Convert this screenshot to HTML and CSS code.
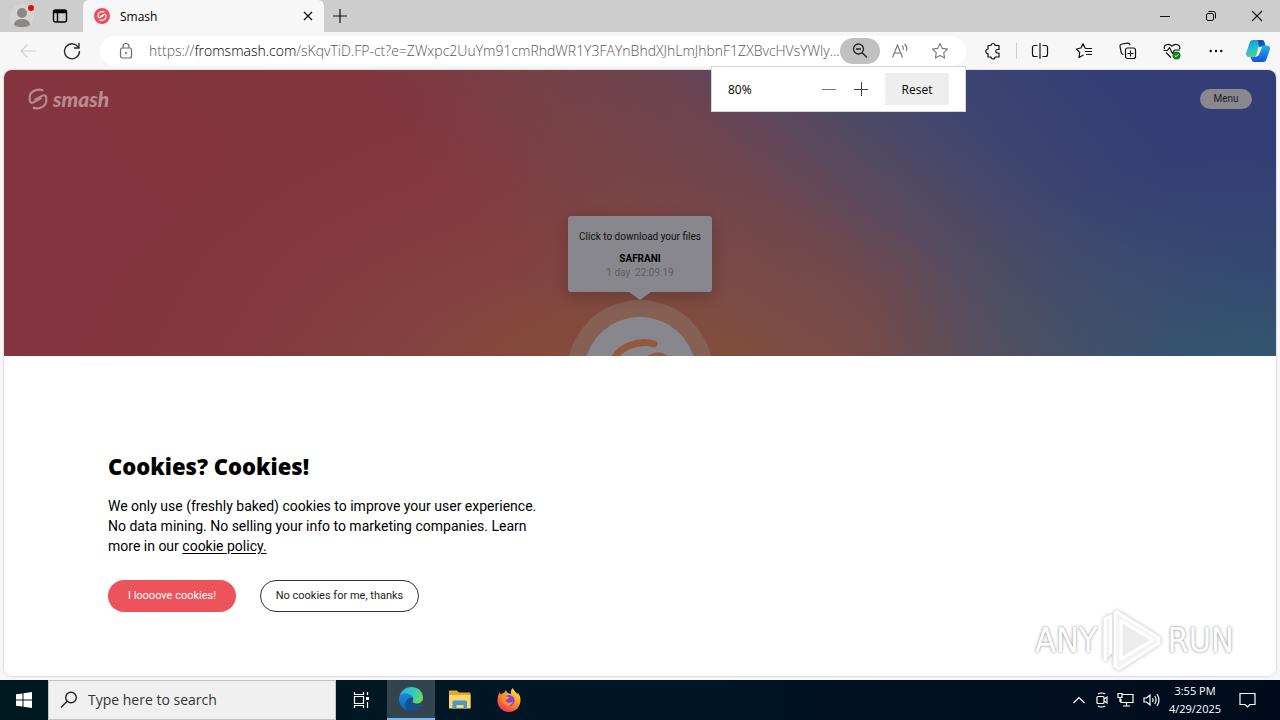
FILE: index.html
```html
<!DOCTYPE html>
<html lang="en">
<head>
<meta charset="utf-8">
<meta name="viewport" content="width=device-width, initial-scale=1">
<title>Smash</title>
<link rel="stylesheet" href="styles.css">
</head>
<body>
<div class="desktop">
  <header class="tabstrip">
    <button class="icon-btn profile" aria-label="Profile">
      <svg width="28" height="28" viewBox="0 0 28 28"><circle cx="14" cy="14" r="12" fill="#d6d4d2"/><circle cx="14" cy="11" r="5" fill="#8b8987"/><path d="M6 23c0-4 3.500-6 8-6s8 2 8 6c-4 3-12 3-16 0z" fill="#8b8987"/><circle cx="23" cy="6" r="3" fill="#e30c13"/></svg>
    </button>
    <button class="icon-btn workspaces" aria-label="Tab actions">
      <svg width="16" height="16" viewBox="0 0 16 16" fill="none" stroke="#000" stroke-width="1.400"><rect x="1.500" y="2" width="13" height="12" rx="2"/><path d="M1.500 4.500h13M5.500 4.500V14" /><path d="M2 3.300h12" stroke-width="2"/></svg>
    </button>
    <div class="tab">
      <svg width="16" height="16" viewBox="0 0 112 112"><circle cx="56" cy="56" r="56" fill="#e9505c"/><g fill="none" stroke="#fff" stroke-width="8" stroke-linecap="round"><path d="M70 27C58 23 31 28 29 48v12c0 8 6 10 12 7l24-13"/><path d="M42 85c12 4 39-1 41-21V52c0-8-6-10-12-7L47 58"/></g></svg>
      <span class="tab-title">Smash</span>
      <button class="icon-btn tab-close" aria-label="Close tab"><svg width="10" height="10" viewBox="0 0 10 10" stroke="#111" stroke-width="1.300"><path d="M1 1l8 8M9 1L1 9"/></svg></button>
    </div>
    <button class="icon-btn new-tab" aria-label="New tab"><svg width="14" height="14" viewBox="0 0 14 14" stroke="#111" stroke-width="1.200"><path d="M7 0v14M0 7h14"/></svg></button>
    <div class="window-controls">
      <button class="icon-btn" aria-label="Minimize"><svg width="12" height="12" viewBox="0 0 12 12" stroke="#111"><path d="M1 6.500h10"/></svg></button>
      <button class="icon-btn" aria-label="Restore"><svg width="12" height="12" viewBox="0 0 12 12" fill="none" stroke="#111"><rect x="1.500" y="3.500" width="7" height="7" rx="1.500"/><path d="M3.500 1.500h5a2 2 0 0 1 2 2v5"/></svg></button>
      <button class="icon-btn" aria-label="Close"><svg width="12" height="12" viewBox="0 0 12 12" stroke="#111" stroke-width="1.100"><path d="M1 1l10 10M11 1L1 11"/></svg></button>
    </div>
  </header>

  <div class="toolbar">
    <button class="icon-btn tool" aria-label="Back"><svg width="18" height="16" viewBox="0 0 18 16" fill="none" stroke="#cfcfcf" stroke-width="1.200"><path d="M17 8H2M8.500 1.500L2 8l6.500 6.500"/></svg></button>
    <button class="icon-btn tool" aria-label="Refresh"><svg width="18" height="18" viewBox="0 0 18 18" fill="none" stroke="#222" stroke-width="1.300"><path d="M15.500 5.500A7.500 7.500 0 1 0 16.500 9"/><path d="M16 1v5h-5"/></svg></button>
    <div class="address">
      <button class="icon-btn lock" aria-label="Site information"><svg width="14" height="18" viewBox="0 0 14 18" fill="none" stroke="#6b6b6b" stroke-width="1.200"><rect x="1.500" y="6" width="11" height="10" rx="2"/><path d="M4 6V4.500a3 3 0 0 1 6 0V6"/><circle cx="7" cy="11" r="1" fill="#6b6b6b" stroke="none"/></svg></button>
      <div class="url">https://<span class="host">fromsmash.com</span>/sKqvTiD.FP-ct?e=ZWxpc2UuYm91cmRhdWR1Y3FAYnBhdXJhLmJhbnF1ZXBvcHVsYWly...</div>
      <button class="icon-btn zoom-btn" aria-label="Zoom"><svg width="16" height="16" viewBox="0 0 16 16" fill="none" stroke="#222" stroke-width="1.300"><circle cx="6.500" cy="6" r="5"/><path d="M10.200 9.700L15 14.500M4 6h5"/></svg></button>
      <button class="icon-btn addr-tool" aria-label="Read aloud"><svg width="18" height="18" viewBox="0 0 18 18" fill="none" stroke="#777" stroke-width="1.200"><path d="M1.500 15.500L6.500 3l5 12.500M3.300 11h6.400M11 3.500q2 2 1.300 4.500M13.500 2q3.500 3 1.800 7"/></svg></button>
      <button class="icon-btn addr-tool" aria-label="Add to favorites"><svg width="18" height="18" viewBox="0 0 18 18" fill="none" stroke="#777" stroke-width="1.100" stroke-linejoin="round"><path d="M9 1.500l2.300 4.900 5.200.7-3.800 3.700.9 5.300L9 13.600l-4.600 2.500.9-5.300L1.500 7.100l5.200-.7z"/></svg></button>
      <div class="zoom-pop">
        <span class="zoom-value">80%</span>
        <button class="icon-btn zoom-step" aria-label="Zoom out"><svg width="14" height="14" viewBox="0 0 14 14" stroke="#777"><path d="M0 7.500h14"/></svg></button>
        <button class="icon-btn zoom-step" aria-label="Zoom in"><svg width="14" height="14" viewBox="0 0 14 14" stroke="#444"><path d="M0 7.500h14M7.500 0v14"/></svg></button>
        <button class="reset">Reset</button>
      </div>
    </div>
    <button class="icon-btn tool ext" aria-label="Extensions"><svg width="18" height="18" viewBox="0 0 18 18" fill="none" stroke="#111" stroke-width="1.200" stroke-linejoin="round"><path d="M4 3.500h3a2 2 0 0 1 4 0h4v4h-1.500a1.600 1.600 0 0 0 0 3.500H15v4h-4a2 2 0 0 1-4 0H4v-3.500a2.100 2.100 0 0 1 0-4.500z"/></svg></button>
    <span class="divider"></span>
    <button class="icon-btn tool" aria-label="Split screen"><svg width="18" height="18" viewBox="0 0 18 18" fill="none" stroke="#111" stroke-width="1.200"><path d="M6.500 3.500h-3a2 2 0 0 0-2 2v7a2 2 0 0 0 2 2h3M11.500 3.500h3a2 2 0 0 1 2 2v7a2 2 0 0 1-2 2h-3M9 1v16"/></svg></button>
    <button class="icon-btn tool" aria-label="Favorites"><svg width="18" height="18" viewBox="0 0 18 18" fill="none" stroke="#111" stroke-width="1.200" stroke-linejoin="round"><path d="M11 6.500L10 6 8 1.800 6 6 1.500 7l3.200 3.500-.7 5L8.500 13M11 6.500h6M10 9.500h7M11 12.500h6"/></svg></button>
    <button class="icon-btn tool" aria-label="Collections"><svg width="18" height="18" viewBox="0 0 18 18" fill="none" stroke="#111" stroke-width="1.200"><rect x="6.500" y="6" width="10" height="10.500" rx="2"/><path d="M11.500 8.500v6M8.500 11.500h6M4.500 12.500c-1.500 0-2-.6-2.300-2L1 4.500c-.3-1.500.5-2.200 2-2.500l5.500-.8c1.500-.2 2.300.5 2.500 2"/></svg></button>
    <button class="icon-btn tool" aria-label="Browser essentials"><svg width="18" height="18" viewBox="0 0 18 18" fill="none" stroke="#111" stroke-width="1.200" stroke-linejoin="round"><path d="M1.500 7C0 3 5.500.5 9 4.200 12.500.5 18 3 16.500 7M3 10.500L8 15.500M.5 8.500h4L6.500 5.500l3 6 2-3.500h5.500"/><circle cx="13.500" cy="13.500" r="4" fill="#178017" stroke="none"/><path d="M11.800 13.500l1.200 1.200 2.300-2.400" stroke="#fff" stroke-width="1"/></svg></button>
    <button class="icon-btn tool" aria-label="Settings and more"><svg width="14" height="4" viewBox="0 0 14 4" fill="#111"><circle cx="1.700" cy="2" r="1.200"/><circle cx="7" cy="2" r="1.200"/><circle cx="12.300" cy="2" r="1.200"/></svg></button>
    <button class="icon-btn copilot" aria-label="Copilot"><svg width="24" height="24" viewBox="0 0 24 24"><defs><linearGradient id="ca" x1="0" y1="0" x2=".4" y2="1"><stop offset="0" stop-color="#1689e8"/><stop offset=".5" stop-color="#20bfd0"/><stop offset="1" stop-color="#57d184"/></linearGradient><linearGradient id="cb" x1="0" y1="0" x2="0" y2="1"><stop offset="0" stop-color="#20b6ef"/><stop offset="1" stop-color="#1452d8"/></linearGradient></defs><path d="M7 1h9c1.500 0 2 1 2.500 2.500L19.500 7h-3c-2 0-2.700 1-3.200 2.500L11 16c-.6 1.500-1.300 2-3 2H3c-2.500 0-3.500-2-2.700-4.500L3.500 4C4.200 2 5 1 7 1z" fill="url(#ca)"/><path d="M11.500 1H16c1.500 0 2 1 2.500 2.500L19.500 7h-3c-1.500 0-2.500.5-3 2z" fill="#1357ac"/><path d="M17 23H8c-1.500 0-2-1-2.500-2.500L4.500 18H8c2 0 2.700-1 3.200-2.500L13.500 9c.6-1.500 1.300-2.500 3-2.500H21c2.500 0 3.500 2 2.700 4.500L20.500 20c-.7 2-1.500 3-3.500 3z" fill="url(#cb)"/><path d="M12.500 8h3.500L13 15.500c-.6 1.500-1.500 2-4 2 1-.5 1.300-1 1.700-2.500z" fill="#f7f7f7"/></svg></button>
  </div>

  <main class="page">
    <section class="hero">
      <div class="hero-bar">
        <a class="brand" href="#">
          <svg width="20" height="22" viewBox="24 20 64 72" fill="none" stroke="currentColor" stroke-width="7" stroke-linecap="round"><path d="M70 27C58 23 31 28 29 48v12c0 8 6 10 12 7l24-13"/><path d="M42 85c12 4 39-1 41-21V52c0-8-6-10-12-7L47 58"/></svg>
          <span>smash</span>
        </a>
        <button class="menu">Menu</button>
      </div>
      <div class="download">
        <div class="bubble">
          <p class="bubble-title">Click to download your files</p>
          <p class="bubble-name">SAFRANI</p>
          <p class="bubble-time">1 day&nbsp; 22:09:19</p>
        </div>
        <button class="ring" aria-label="Download">
          <span class="disc"><svg width="112" height="112" viewBox="0 0 112 112" fill="none" stroke="#94573f" stroke-width="7" stroke-linecap="round"><path d="M70 27C58 23 31 28 29 48v12c0 8 6 10 12 7l24-13"/><path d="M42 85c12 4 39-1 41-21V49c0-10-8-12-16-8L47 54"/></svg></span>
        </button>
      </div>
    </section>
    <section class="cookies">
      <h1>Cookies? Cookies!</h1>
      <p class="cookie-text">We only use (freshly baked) cookies to improve your user experience. No data mining. No selling your info to marketing companies. Learn more in our <a href="#">cookie policy.</a></p>
      <div class="actions">
        <button class="accept">I loooove cookies!</button>
        <button class="decline">No cookies for me, thanks</button>
      </div>
      <div class="watermark">
        <span>ANY</span>
        <svg width="58" height="64" viewBox="0 0 58 64" fill="none" stroke="#fff" stroke-width="3" stroke-linejoin="round"><path d="M2 53V11l6-3v38M14 4l42 26v5L16 61l-4-3V5z" fill="#f3f3f3"/><path d="M18 13v38l32-19z" fill="#ececec"/></svg>
        <span>RUN</span>
      </div>
    </section>
  </main>

  <footer class="taskbar">
    <button class="icon-btn start" aria-label="Start"><svg width="16" height="16" viewBox="0 0 16 16" fill="#fff"><path d="M0 2.300l6.500-.9v6.100H0zM7.500 1.200L16 0v7.500H7.500zM0 8.500h6.500v6.100L0 13.700zM7.500 8.500H16V16l-8.500-1.200z"/></svg></button>
    <label class="search">
      <svg width="18" height="18" viewBox="0 0 18 18" fill="none" stroke="#222" stroke-width="1.400"><circle cx="11" cy="6.500" r="5.300"/><path d="M7.200 10.300L1 16.500"/></svg>
      <input type="text" placeholder="Type here to search" aria-label="Type here to search">
    </label>
    <div class="tasks">
      <button class="icon-btn task" aria-label="Task view"><svg width="18" height="18" viewBox="0 0 18 18" fill="none" stroke="#fff" stroke-width="1.200"><path d="M1.500 1v2.500h9V1M1.500 17v-2.500h9V17M1.500 5.500h9v7h-9zM14.500 1v3M14.500 11v6"/><rect x="13" y="6" width="3" height="3" fill="#fff" stroke="none"/></svg></button>
      <button class="icon-btn task active" aria-label="Microsoft Edge"><svg width="24" height="24" viewBox="0 0 24 24"><defs><linearGradient id="ea" x1="0" y1="0" x2="1" y2=".3"><stop offset="0" stop-color="#2aa6dc"/><stop offset=".6" stop-color="#32c8c4"/><stop offset="1" stop-color="#61d86a"/></linearGradient><linearGradient id="eb" x1="0" y1="0" x2="0" y2="1"><stop offset="0" stop-color="#1788d8"/><stop offset="1" stop-color="#1068bd"/></linearGradient></defs><path d="M.3 10.500C1.500 4 6.500 0 12.500 0 19 0 24 4.800 24 10.500c0 4-3 6-6 6-3.500 0-4.800-1.300-4.500-2.200 1.300-1.500 1-4-1-5.500C9 6.500 3 7 .3 10.500z" fill="url(#ea)"/><path d="M0 12c.3-4 4-6.200 8-5.500 3.500.5 5.800 2.900 5.700 5.300-.2 1-1.200 1.500-1.200 3 0 3.200 5.500 5.200 9.700 2.600.5-.3.900.1.600.6C20.500 21.800 16.500 24 12 24 5.500 24 0 19 0 12z" fill="url(#eb)"/><path d="M8.500 23.500C5 20 5.500 14 9.500 11.500c2-1 4.200-.4 4.200.8-.3.800-1.200 1.300-1.200 2.500 0 3.200 5.500 5.200 9.700 2.600.5-.3.900.1.600.6-2.500 4.500-9 7-14.300 5.500z" fill="#164f91"/></svg></button>
      <button class="icon-btn task" aria-label="File Explorer"><svg width="22" height="20" viewBox="0 0 22 20"><path d="M0 1.500C0 .7.500.5 1 .5h7l2 2h10.500c.7 0 1 .3 1 1V18H0z" fill="#e7a72b"/><path d="M0 5h21.500v13.500H0z" fill="#ffd667"/><path d="M3.500 19v-7c0-1 .5-1.500 1.500-1.500h11.500c1 0 1.500.5 1.500 1.500v7h-3.500v-4h-7v4z" fill="#4599cf"/></svg></button>
      <button class="icon-btn task" aria-label="Firefox"><svg width="24" height="24" viewBox="0 0 24 24"><defs><linearGradient id="ff" x1=".8" y1="0" x2=".2" y2="1"><stop offset="0" stop-color="#fff04a"/><stop offset=".4" stop-color="#ff9827"/><stop offset="1" stop-color="#f42a58"/></linearGradient></defs><path d="M3 4c0 1.300.3 2 1.200 2.500C5 5.600 6 5 7.500 4.800 7.500 3.800 8 3 9 2.300c.3 1.500 1.200 2.200 2.500 3L14 6c-.3-2.500 0-4.500 2-6 .3 2.500 3 4 4.500 6.500 0-.8 0-1.500-.3-2.200C23 7 23.500 9.500 23.500 12c0 7-5 12-11.500 12S.5 19 .5 13C.5 9 1.500 6 3 4z" fill="url(#ff)"/><circle cx="12" cy="12.500" r="5.500" fill="#7b46d9"/><path d="M5 8.500c3-1.500 4.500 0 7.500.7-.5 1.800-3 1.700-3.800 3 .8 3.500 5.500 2.800 7.300.8-.5 5-6 6-8.800 3.800C5 15 4.200 11.500 5 8.500z" fill="#ff8e25"/></svg></button>
    </div>
    <div class="tray">
      <svg width="12" height="8" viewBox="0 0 12 8" fill="none" stroke="#fff" stroke-width="1.200"><path d="M.5 7L6 1.500 11.500 7"/></svg>
      <svg width="14" height="16" viewBox="0 0 14 16" fill="none" stroke="#fff" stroke-width="1.200"><rect x="3" y="4.500" width="7" height="7" rx="1"/><path d="M10 7l3-2v6l-3-2M4 2q3.500-2 7 0M4 14q3.500 2 7 0"/></svg>
      <svg width="17" height="16" viewBox="0 0 17 16" fill="none" stroke="#fff" stroke-width="1.200"><path d="M5.500 2.500H16v8H4V7M9.500 10.500v3.500M6 14h7M1 1.500h4v4H1zM3 5.500V10"/></svg>
      <svg width="17" height="14" viewBox="0 0 17 14" fill="none" stroke="#fff" stroke-width="1.200"><path d="M1 5h2.500L7 2v10L3.500 9H1zM9.500 5q1.300 2 0 4M11.800 3q2.600 4 0 8M14 1q4 6 0 12"/></svg>
    </div>
    <div class="clock"><span>3:55 PM</span><span>4/29/2025</span></div>
    <button class="icon-btn notify" aria-label="Notifications"><svg width="17" height="17" viewBox="0 0 17 17" fill="none" stroke="#fff" stroke-width="1.200"><path d="M1 1.500h15v11h-5L8.500 15 6 12.500H1z"/></svg></button>
  </footer>
</div>
</body>
</html>
```
FILE: styles.css
```css
* { box-sizing: border-box; }
body { margin: 0; font-family: "Open Sans", "Noto Sans", sans-serif; font-size: 12px; color: #000; }
button { font: inherit; color: inherit; border: 0; padding: 0; background: none; }
p, h1 { margin: 0; }
svg { display: block; flex: none; }

.desktop { display: flex; flex-direction: column; min-height: 100vh; background: #f7f7f7; }
.icon-btn { display: flex; align-items: center; justify-content: center; flex: none; }

.tabstrip { display: flex; height: 32px; background: #cdcdcd; }
.profile { width: 44px; }
.workspaces { width: 32px; }
.tab { display: flex; align-items: center; gap: 10px; width: 241px; margin-left: 7px; padding: 0 8px 0 11px; background: #f7f7f7; border-radius: 6px 6px 0 0; }
.tab-title { flex: 1; }
.tab-close { width: 16px; height: 16px; }
.new-tab { width: 32px; }
.window-controls { display: flex; margin-left: auto; }
.window-controls .icon-btn { width: 46px; }

.toolbar { display: flex; align-items: center; height: 38px; padding: 0 2px 0 6px; }
.tool { width: 44px; height: 30px; }
.address { position: relative; display: flex; align-items: center; flex: 1; min-width: 0; height: 30px; margin: 0 4px 0 6px; padding: 0 6px 0 19px; background: #fff; border-radius: 15px; }
.lock { width: 14px; margin-right: 16px; }
.url { flex: 1; min-width: 0; overflow: hidden; white-space: nowrap; font-size: 14px; line-height: 18px; font-weight: 300; color: #555; }
.host { color: #000; }
.zoom-btn { width: 40px; height: 26px; border-radius: 13px; background: #c0c0c0; }
.addr-tool { width: 40px; height: 26px; }
.ext { width: 46px; }
.divider { width: 1px; height: 16px; margin-right: 1px; background: #ccc; }
.toolbar > .copilot { width: 40px; height: 30px; }

.zoom-pop { position: absolute; z-index: 2; top: 100%; right: 0; display: flex; align-items: center; width: 255px; height: 46px; padding: 0 16px; background: #fff; border: 1px solid #d5d5dc; }
.zoom-value { flex: 1; }
.zoom-step { width: 32px; height: 32px; }
.reset { width: 64px; height: 32px; margin-left: 8px; background: #eee; border-radius: 2px; }

.page { display: flex; flex-direction: column; flex: 1; margin: 0 4px 4px; background: #fff; border-radius: 8px; overflow: hidden; box-shadow: 0 0 2px #aaa; }
.hero { flex: 1 0 0; display: flex; flex-direction: column; height: 0; min-height: 286px; overflow: hidden;
  background:
    radial-gradient(ellipse 34% 85% at 100% 115%, #345b6c 0%, rgba(52, 91, 108, 0.500) 40%, rgba(52, 91, 108, 0) 100%),
    radial-gradient(ellipse 46% 120% at 50% 120%, rgba(136, 84, 54, 0.950) 0%, rgba(130, 84, 64, 0.500) 40%, rgba(130, 84, 64, 0.150) 70%, rgba(130, 84, 64, 0) 100%),
    linear-gradient(52deg, #84343e 0%, #83353e 38%, #764047 50%, #6b4351 59%, #4d4967 69%, #3b4471 79%, #343e76 88%, #343d76 100%); }
.hero-bar { display: flex; align-items: center; justify-content: space-between; padding: 17px 24px 0; }
.brand { display: flex; align-items: center; gap: 5px; color: #b98b90; text-decoration: none; font: italic 900 21px/24px Lato, sans-serif; }
.menu { width: 52px; height: 20px; border-radius: 10px; background: #89888e; color: #1c1b28; font: 10px/20px Roboto, sans-serif; }
.download { display: flex; flex-direction: column; align-items: center; margin-top: 105px; }
.bubble { position: relative; z-index: 1; width: 144px; height: 76px; padding-top: 14px; background: #88878d; border-radius: 3px; text-align: center; font: 10px/14px Roboto, sans-serif; box-shadow: 0 4px 16px rgba(0, 0, 0, 0.200); }
.bubble::after { content: ""; position: absolute; top: 100%; left: 50%; margin-left: -11px; border: 11px solid transparent; border-top: 8px solid #88878d; border-bottom: 0; }
.bubble-title { color: #111; margin-bottom: 8px; }
.bubble-name { font-weight: 700; }
.bubble-time { color: #5e5d62; }
.ring { display: flex; flex: none; align-items: center; justify-content: center; width: 146px; height: 146px; margin-top: 8px; border-radius: 50%; background: #856053; }
.disc { width: 112px; height: 112px; border-radius: 50%; background: #88878d; overflow: hidden; }

.cookies { position: relative; flex: none; padding: 94px 104px 64px; background: #fff; }
h1 { font: 800 22px/32px "Open Sans", sans-serif; }
.cookie-text { max-width: 440px; margin-top: 14px; font: 14px/20px Roboto, sans-serif; }
.cookie-text a { color: inherit; text-underline-offset: 2px; }
.actions { display: flex; gap: 24px; margin-top: 24px; font: 11px/16px Roboto, sans-serif; }
.accept, .decline { height: 32px; border-radius: 16px; }
.accept { width: 128px; background: #ec535b; color: #fff; }
.decline { width: 159px; border: 1px solid #333; color: #222; }
.watermark { position: absolute; right: 42px; bottom: 4px; display: flex; align-items: center; gap: 6px; color: #fff; font: 34px/64px "DejaVu Sans Condensed", "Open Sans", sans-serif; text-shadow: 0 0 3px #999, 0 0 2px #ccc; }
.watermark svg { filter: drop-shadow(0 0 2px #bbb); }

.taskbar { display: flex; align-items: stretch; height: 40px; background: linear-gradient(90deg, #001820, #001626 50%, #010b1d); color: #fff; }
.start { width: 48px; }
.search { display: flex; align-items: center; gap: 10px; width: 288px; padding: 0 11px; background: #f0f0f0; border: 1px solid #c4c4c4; }
.search input { flex: 1; min-width: 0; padding: 0; border: 0; background: none; font: 14px/20px "Open Sans", sans-serif; color: #222; }
.search input::placeholder { color: #333; opacity: 1; }
.tasks { display: flex; gap: 1px; margin-left: 2px; }
.task { width: 48px; }
.task.active { background: #32444d; border-bottom: 2px solid #76b9ed; }
.tray { display: flex; align-items: center; gap: 9px; margin-left: auto; }
.clock { display: flex; flex-direction: column; justify-content: center; width: 70px; text-align: center; font-size: 11px; line-height: 18px; }
.notify { width: 34px; margin-right: 16px; }
```
